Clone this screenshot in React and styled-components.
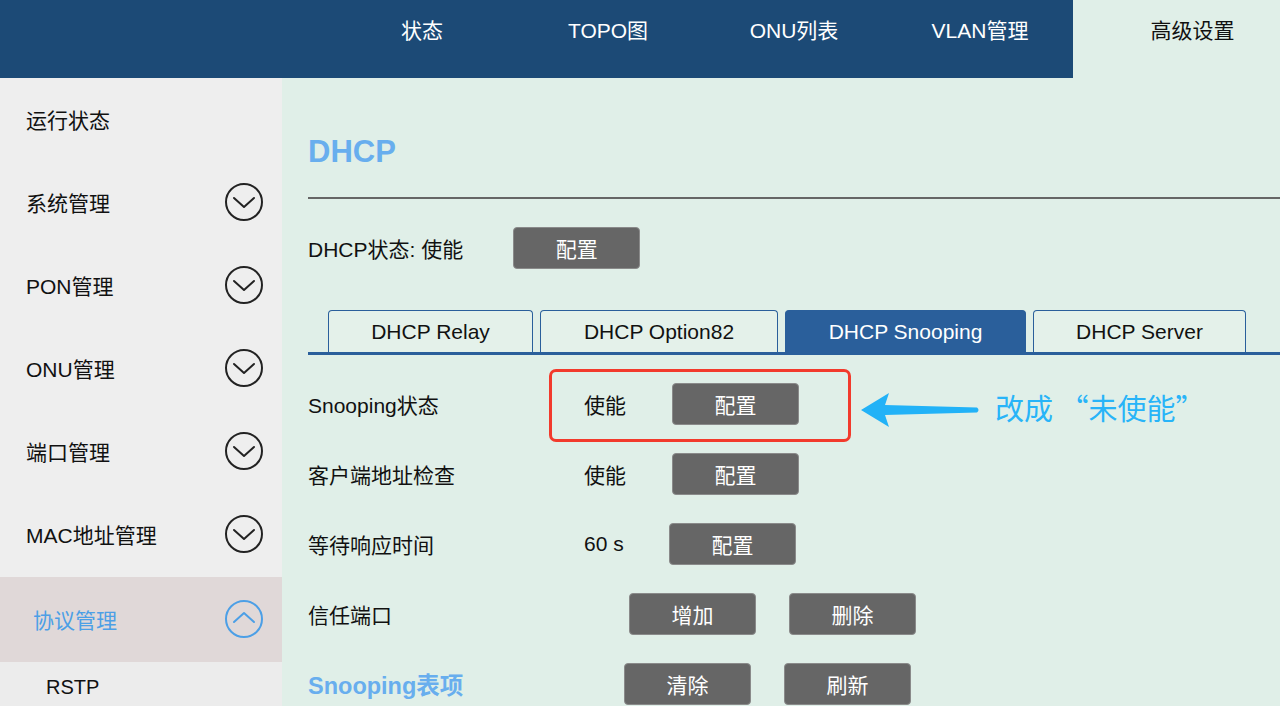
import React from "react";
import styled, { createGlobalStyle } from "styled-components";

const FONT = `"Liberation Sans", "Noto Sans CJK SC", sans-serif`;

const navItems = ["状态", "TOPO图", "ONU列表", "VLAN管理"];

const sideItems = [
  { label: "运行状态", icon: false },
  { label: "系统管理", icon: true },
  { label: "PON管理", icon: true },
  { label: "ONU管理", icon: true },
  { label: "端口管理", icon: true },
  { label: "MAC地址管理", icon: true },
];

const tabs = [
  { label: "DHCP Relay", width: 205 },
  { label: "DHCP Option82", width: 238 },
  { label: "DHCP Snooping", width: 241, active: true },
  { label: "DHCP Server", width: 213 },
];

export default function App() {
  return (
    <>
      <GlobalStyle />
      <Page>
        <Header>
          <Brand />
          {navItems.map((item) => (
            <NavItem key={item}>{item}</NavItem>
          ))}
          <NavItem $active>高级设置</NavItem>
        </Header>
        <Body>
          <Sidebar>
            {sideItems.map((item) => (
              <SideItem key={item.label}>
                <span>{item.label}</span>
                {item.icon && <CircleIcon />}
              </SideItem>
            ))}
            <SideItem $active>
              <span>协议管理</span>
              <CircleIcon up color="#4c9fe6" />
            </SideItem>
            <SubItem>RSTP</SubItem>
          </Sidebar>

          <Main>
            <Title>DHCP</Title>
            <Divider />
            <StatusRow>
              <Text>DHCP状态: 使能</Text>
              <Button>配置</Button>
            </StatusRow>

            <TabBar>
              {tabs.map((t) => (
                <Tab key={t.label} $width={t.width} $active={t.active}>
                  {t.label}
                </Tab>
              ))}
            </TabBar>

            <RowList>
              <Row>
                <Label $width={276}>Snooping状态</Label>
                <Value>使能</Value>
                <Button>配置</Button>
                <Highlight />
                <Arrow />
                <Note>改成 “未使能”</Note>
              </Row>
              <Row>
                <Label $width={276}>客户端地址检查</Label>
                <Value>使能</Value>
                <Button>配置</Button>
              </Row>
              <Row>
                <Label $width={276}>等待响应时间</Label>
                <Value $width={85}>60 s</Value>
                <Button>配置</Button>
              </Row>
              <Row $gap={33}>
                <Label $width={288}>信任端口</Label>
                <Button>增加</Button>
                <Button>删除</Button>
              </Row>
              <Row $gap={33}>
                <SectionLabel $width={283}>Snooping表项</SectionLabel>
                <Button>清除</Button>
                <Button>刷新</Button>
              </Row>
            </RowList>
          </Main>
        </Body>
      </Page>
    </>
  );
}

function CircleIcon({ up, color = "#222" }) {
  return (
    <IconBox width="40" height="40" viewBox="0 0 40 40">
      <circle cx="20" cy="20" r="18" fill="none" stroke={color} strokeWidth="2" />
      <polyline
        points={up ? "10,23 20,14 30,23" : "10,16 20,25 30,16"}
        fill="none"
        stroke={color}
        strokeWidth="2"
        strokeLinecap="round"
        strokeLinejoin="round"
      />
    </IconBox>
  );
}

function Arrow() {
  return (
    <ArrowSvg width="122" height="44" viewBox="0 0 122 44">
      <path
        d="M2 22 L30 5 L26 17 L118 19.5 Q121 22 118 24.5 L26 27 L30 39 Z"
        fill="#22b2f7"
      />
    </ArrowSvg>
  );
}

const GlobalStyle = createGlobalStyle`
  html, body {
    margin: 0;
    padding: 0;
    background: #e0efe8;
    font-family: ${FONT};
  }
  * {
    box-sizing: border-box;
  }
`;

const Page = styled.div`
  width: 1280px;
  height: 706px;
  overflow: hidden;
  display: flex;
  flex-direction: column;
`;

const Header = styled.header`
  height: 78px;
  flex-shrink: 0;
  display: flex;
  background: #1c4a76;
`;

const Brand = styled.div`
  width: 329px;
`;

const NavItem = styled.div`
  width: ${(p) => (p.$active ? "207px" : "186px")};
  padding-top: 18px;
  padding-left: ${(p) => (p.$active ? "32px" : "0")};
  text-align: center;
  font-size: 21px;
  line-height: 26px;
  color: ${(p) => (p.$active ? "#111" : "#fff")};
  background: ${(p) => (p.$active ? "#e0efe8" : "transparent")};
`;

const Body = styled.div`
  flex: 1;
  display: flex;
  min-height: 0;
`;

const Sidebar = styled.aside`
  width: 282px;
  flex-shrink: 0;
  background: #eeeeee;
  display: flex;
  flex-direction: column;
`;

const SideItem = styled.div`
  height: ${(p) => (p.$active ? "85px" : "83px")};
  margin-top: ${(p) => (p.$active ? "1px" : "0")};
  flex-shrink: 0;
  display: flex;
  align-items: center;
  justify-content: space-between;
  padding: 0 18px 2px ${(p) => (p.$active ? "33px" : "26px")};
  font-size: 21px;
  color: ${(p) => (p.$active ? "#4c9fe6" : "#111")};
  background: ${(p) => (p.$active ? "#e0d8d8" : "transparent")};
`;

const SubItem = styled.div`
  height: 50px;
  flex-shrink: 0;
  display: flex;
  align-items: center;
  padding-left: 46px;
  font-size: 20px;
  color: #111;
  background: #ececec;
`;

const IconBox = styled.svg`
  display: block;
`;

const Main = styled.main`
  flex: 1;
  padding: 54px 0 0 26px;
  background: #e0efe8;
  overflow: hidden;
`;

const Title = styled.h1`
  margin: 0;
  font-size: 31px;
  line-height: 40px;
  font-weight: bold;
  color: #68aeee;
`;

const Divider = styled.div`
  margin-top: 25px;
  height: 2px;
  background: #666;
`;

const StatusRow = styled.div`
  margin-top: 28px;
  display: flex;
  align-items: center;
  gap: 50px;
`;

const Text = styled.span`
  font-size: 21px;
  color: #111;
`;

const Button = styled.button`
  width: 127px;
  height: 42px;
  flex-shrink: 0;
  border: 1px solid #8a8a8a;
  border-radius: 4px;
  background: #666666;
  color: #fff;
  font-family: ${FONT};
  font-size: 21px;
  padding: 0;
`;

const TabBar = styled.div`
  margin-top: 41px;
  display: flex;
  gap: 7px;
  padding-left: 20px;
  border-bottom: 3px solid #2a5f9b;
`;

const Tab = styled.div`
  width: ${(p) => p.$width}px;
  height: 42px;
  display: flex;
  align-items: center;
  justify-content: center;
  border: 1.5px solid #2a5f9b;
  border-bottom: none;
  border-radius: 4px 4px 0 0;
  font-size: 21px;
  color: ${(p) => (p.$active ? "#fff" : "#111")};
  background: ${(p) => (p.$active ? "#2a5f9b" : "#e4f1ea")};
`;

const RowList = styled.div`
  margin-top: 14px;
  display: flex;
  flex-direction: column;
`;

const Row = styled.div`
  position: relative;
  height: 70px;
  flex-shrink: 0;
  display: flex;
  align-items: center;
  gap: ${(p) => p.$gap || 0}px;
`;

const Label = styled.span`
  width: ${(p) => p.$width}px;
  flex-shrink: 0;
  font-size: 21px;
  color: #111;
`;

const SectionLabel = styled(Label)`
  font-size: 23.5px;
  font-weight: bold;
  color: #68aeee;
`;

const Value = styled.span`
  width: ${(p) => p.$width || 88}px;
  flex-shrink: 0;
  font-size: 21px;
  color: #111;
`;

const Highlight = styled.div`
  position: absolute;
  left: 241px;
  top: 0;
  width: 302px;
  height: 73px;
  border: 3px solid #f23a2c;
  border-radius: 7px;
`;

const ArrowSvg = styled.svg`
  position: absolute;
  left: 551px;
  top: 19px;
`;

const Note = styled.span`
  position: absolute;
  left: 687px;
  top: 20px;
  font-size: 29px;
  line-height: 36px;
  color: #28b4f8;
  font-family: "Noto Sans CJK SC", sans-serif;
`;
